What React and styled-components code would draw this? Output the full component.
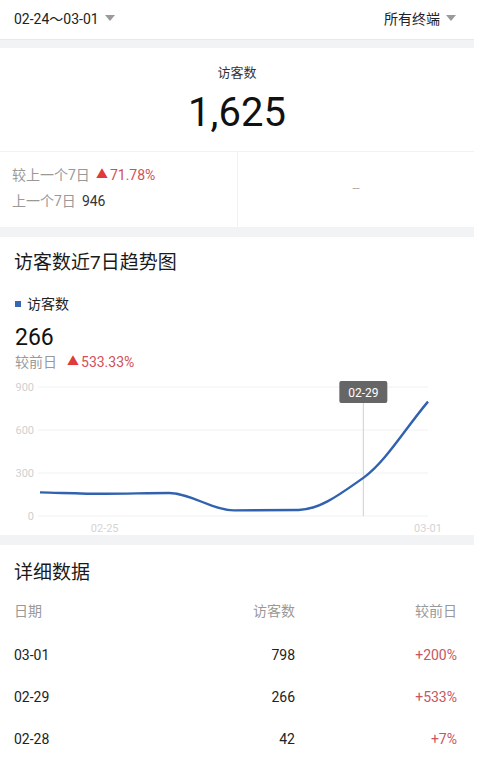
import React from 'react';
import styled, { createGlobalStyle } from 'styled-components';

const GlobalStyle = createGlobalStyle`
  html, body {
    margin: 0;
    padding: 0;
    background: #ffffff;
  }
  body {
    font-family: Roboto, "Noto Sans CJK SC", sans-serif;
    color: #222;
  }
`;

const days = ['02-24', '02-25', '02-26', '02-27', '02-28', '02-29', '03-01'];
const values = [165, 155, 160, 39, 42, 266, 798];

const rows = [
  { date: '03-01', count: 798, change: '+200%' },
  { date: '02-29', count: 266, change: '+533%' },
  { date: '02-28', count: 42, change: '+7%' },
];

// chart geometry (svg coords)
const X0 = 40;
const X1 = 428;
const Y0 = 141; // value 0
const PER = 129 / 900;

const pts = values.map((v, i) => [X0 + ((X1 - X0) / 6) * i, Y0 - v * PER]);

function monotonePath(p) {
  const n = p.length;
  const d = [];
  const m = [];
  for (let i = 0; i < n - 1; i += 1) {
    d.push((p[i + 1][1] - p[i][1]) / (p[i + 1][0] - p[i][0]));
  }
  m[0] = d[0];
  m[n - 1] = d[n - 2];
  for (let i = 1; i < n - 1; i += 1) {
    if (d[i - 1] * d[i] <= 0) m[i] = 0;
    else m[i] = (2 * d[i - 1] * d[i]) / (d[i - 1] + d[i]);
  }
  let s = `M${p[0][0]},${p[0][1]}`;
  for (let i = 0; i < n - 1; i += 1) {
    const h = (p[i + 1][0] - p[i][0]) / 3;
    s += ` C${p[i][0] + h},${p[i][1] + m[i] * h} ${p[i + 1][0] - h},${p[i + 1][1] - m[i + 1] * h} ${p[i + 1][0]},${p[i + 1][1]}`;
  }
  return s;
}

const Caret = () => (
  <CaretSvg viewBox="0 0 10 6" width="10" height="6">
    <path d="M0 0 H10 L5 6 Z" fill="#9a9a9a" />
  </CaretSvg>
);

const Up = () => <UpMark>▲</UpMark>;

const TrendChart = () => (
  <ChartSvg viewBox="0 0 474 160" width="474" height="160">
    {[900, 600, 300, 0].map((v) => {
      const y = Y0 - v * PER;
      return (
        <g key={v}>
          <line x1="38" x2="428" y1={y} y2={y} stroke="#f1f1f1" strokeWidth="1" />
          <text x="34" y={y + 4} textAnchor="end" fontSize="11" fill="#d0d0d0">{v}</text>
        </g>
      );
    })}
    <line x1={pts[5][0]} x2={pts[5][0]} y1="27" y2={Y0} stroke="#cfcfcf" strokeWidth="1" />
    <path d={monotonePath(pts)} fill="none" stroke="#3162b0" strokeWidth="2.4" strokeLinejoin="round" />
    <rect x={pts[5][0] - 24} y="6" width="48" height="22" rx="2" fill="#666666" />
    <text x={pts[5][0]} y="21.5" textAnchor="middle" fontSize="12" fill="#ffffff">02-29</text>
    <text x={pts[1][0]} y="157" textAnchor="middle" fontSize="11" fill="#d4d4d4">{days[1]}</text>
    <text x={pts[6][0]} y="157" textAnchor="middle" fontSize="11" fill="#d4d4d4">{days[6]}</text>
  </ChartSvg>
);

export default function App() {
  return (
    <>
      <GlobalStyle />
      <Page>
        <TopBar>
          <Filter>
            02-24～03-01
            <Caret />
          </Filter>
          <Filter>
            所有终端
            <Caret />
          </Filter>
        </TopBar>

        <Card>
          <Summary>
            <SummaryLabel>访客数</SummaryLabel>
            <BigNumber>1,625</BigNumber>
          </Summary>
          <Compare>
            <CompareCell>
              <Line>
                较上一个7日
                <Red>
                  <Up />
                  71.78%
                </Red>
              </Line>
              <Line>
                上一个7日
                <Dark>946</Dark>
              </Line>
            </CompareCell>
            <CompareCell $center>
              <Muted>--</Muted>
            </CompareCell>
          </Compare>
        </Card>

        <Card>
          <SectionTitle>访客数近7日趋势图</SectionTitle>
          <Legend>
            <Swatch />
            访客数
          </Legend>
          <DayValue>266</DayValue>
          <Line>
            较前日
            <Red $gap={10}>
              <Up />
              533.33%
            </Red>
          </Line>
          <TrendChart />
        </Card>

        <Card $grow>
          <SectionTitle $top={16}>详细数据</SectionTitle>
          <Table>
            <HeadRow>
              <Cell>日期</Cell>
              <Cell $right>访客数</Cell>
              <Cell $right>较前日</Cell>
            </HeadRow>
            {rows.map((r) => (
              <Row key={r.date}>
                <Cell>{r.date}</Cell>
                <Cell $right>{r.count}</Cell>
                <Cell $right $red>{r.change}</Cell>
              </Row>
            ))}
          </Table>
        </Card>
      </Page>
    </>
  );
}

const Page = styled.div`
  width: 474px;
  min-height: 760px;
  background: #f2f3f4;
  display: flex;
  flex-direction: column;
  gap: 10px;
`;

const TopBar = styled.header`
  height: 39px;
  margin-bottom: -1px;
  padding: 0 18px 0 14px;
  background: #ffffff;
  display: flex;
  align-items: center;
  justify-content: space-between;
  box-shadow: 0 1px 0 #e8e9ea;
`;

const Filter = styled.div`
  display: flex;
  align-items: center;
  gap: 6px;
  font-size: 14px;
  color: #222;
  padding-bottom: 4px;
`;

const CaretSvg = styled.svg`
  display: block;
  margin-top: 1px;
`;

const Card = styled.section`
  background: #ffffff;
  display: flex;
  flex-direction: column;
  flex-grow: ${(p) => (p.$grow ? 1 : 0)};
`;

const Summary = styled.div`
  height: 103px;
  display: flex;
  flex-direction: column;
  align-items: center;
  border-bottom: 1px solid #f2f2f2;
`;

const SummaryLabel = styled.div`
  margin-top: 16px;
  font-size: 13px;
  color: #333;
  line-height: 18px;
`;

const BigNumber = styled.div`
  margin-top: 7px;
  font-size: 40px;
  line-height: 48px;
  color: #111;
`;

const Compare = styled.div`
  height: 75px;
  display: grid;
  grid-template-columns: 237px 1fr;
`;

const CompareCell = styled.div`
  display: flex;
  flex-direction: column;
  justify-content: center;
  align-items: ${(p) => (p.$center ? 'center' : 'flex-start')};
  gap: 8px;
  padding-left: ${(p) => (p.$center ? 0 : 12)}px;
  padding-bottom: 4px;
  & + & {
    border-left: 1px solid #f2f2f2;
  }
`;

const Line = styled.div`
  display: flex;
  align-items: center;
  font-size: 14px;
  line-height: 18px;
  color: #999;
  ${Card} > & {
    padding-left: 15px;
  }
`;

const Red = styled.span`
  display: inline-flex;
  align-items: center;
  margin-left: ${(p) => (p.$gap ? p.$gap : 6)}px;
  color: #d24f57;
`;

const UpMark = styled.span`
  color: #e03a3a;
  font-size: 12px;
  margin-right: 2px;
`;

const Dark = styled.span`
  margin-left: 6px;
  color: #333;
`;

const Muted = styled.span`
  color: #aaa;
  font-size: 13px;
`;

const SectionTitle = styled.h2`
  margin: 0;
  padding: ${(p) => (p.$top ? p.$top : 14)}px 0 0 14px;
  font-size: 19px;
  line-height: 24px;
  font-weight: 400;
  color: #1a1a1a;
`;

const Legend = styled.div`
  margin: 20px 0 0 15px;
  display: flex;
  align-items: center;
  gap: 6px;
  font-size: 14px;
  line-height: 18px;
  color: #222;
`;

const Swatch = styled.span`
  width: 6px;
  height: 6px;
  background: #3766b4;
`;

const DayValue = styled.div`
  margin: 10px 0 0 15px;
  font-size: 23px;
  line-height: 30px;
  color: #111;
`;

const ChartSvg = styled.svg`
  display: block;
  margin-top: 4px;
  font-family: Roboto, "Noto Sans CJK SC", sans-serif;
`;

const Table = styled.div`
  margin-top: 5px;
  display: flex;
  flex-direction: column;
`;

const HeadRow = styled.div`
  height: 40px;
  display: grid;
  grid-template-columns: 1fr 120px 162px;
  align-items: center;
  padding: 0 17px 0 14px;
  color: #999;
  font-size: 14px;
`;

const Row = styled(HeadRow)`
  height: 42px;
  color: #222;
  &:nth-of-type(2) {
    margin-top: 4px;
  }
`;

const Cell = styled.div`
  text-align: ${(p) => (p.$right ? 'right' : 'left')};
  color: ${(p) => (p.$red ? '#c95561' : 'inherit')};
`;
